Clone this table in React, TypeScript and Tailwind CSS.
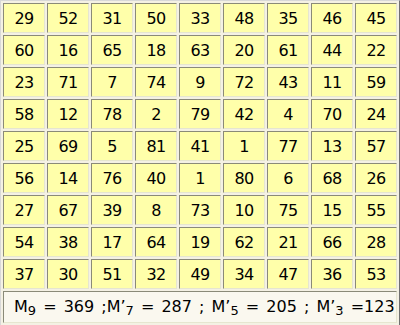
const grid: number[][] = [
  [29, 52, 31, 50, 33, 48, 35, 46, 45],
  [60, 16, 65, 18, 63, 20, 61, 44, 22],
  [23, 71, 7, 74, 9, 72, 43, 11, 59],
  [58, 12, 78, 2, 79, 42, 4, 70, 24],
  [25, 69, 5, 81, 41, 1, 77, 13, 57],
  [56, 14, 76, 40, 1, 80, 6, 68, 26],
  [27, 67, 39, 8, 73, 10, 75, 15, 55],
  [54, 38, 17, 64, 19, 62, 21, 66, 28],
  [37, 30, 51, 32, 49, 34, 47, 36, 53],
];

export default function App() {
  return (
    <div className="w-[400px] h-[325px] bg-white font-['DejaVu_Sans',sans-serif] text-black overflow-hidden">
      <table className="w-[400px] table-fixed border-separate border-spacing-[2px] border border-t-[#d8d8d8] border-l-[#d8d8d8] border-b-[#707070] border-r-[#707070] bg-[#f4f1e4]">
        <tbody>
          {grid.map((row, i) => (
            <tr key={i}>
              {row.map((n, j) => (
                <td
                  key={j}
                  className="h-[30px] p-0 pt-[1px] text-center align-middle text-[16px] tracking-[-0.6px] bg-[#ffffaa] border border-t-[#8a8a78] border-l-[#8a8a78] border-b-[#e6e6d0] border-r-[#e6e6d0]"
                >
                  {n}
                </td>
              ))}
            </tr>
          ))}
          <tr>
            <td
              colSpan={9}
              className="h-[32px] p-0 pl-[10px] text-left align-middle text-[16px] [word-spacing:2px] whitespace-nowrap overflow-hidden bg-[#faf8ef] border border-t-[#8a8a78] border-l-[#8a8a78] border-b-[#e6e6d0] border-r-[#e6e6d0]"
            >
              M<sub className="text-[13px]">9</sub> = 369 ;M’<sub className="text-[13px]">7</sub> = 287 ; M’<sub className="text-[13px]">5</sub> = 205 ; M’<sub className="text-[13px]">3</sub> =123
            </td>
          </tr>
        </tbody>
      </table>
    </div>
  );
}
